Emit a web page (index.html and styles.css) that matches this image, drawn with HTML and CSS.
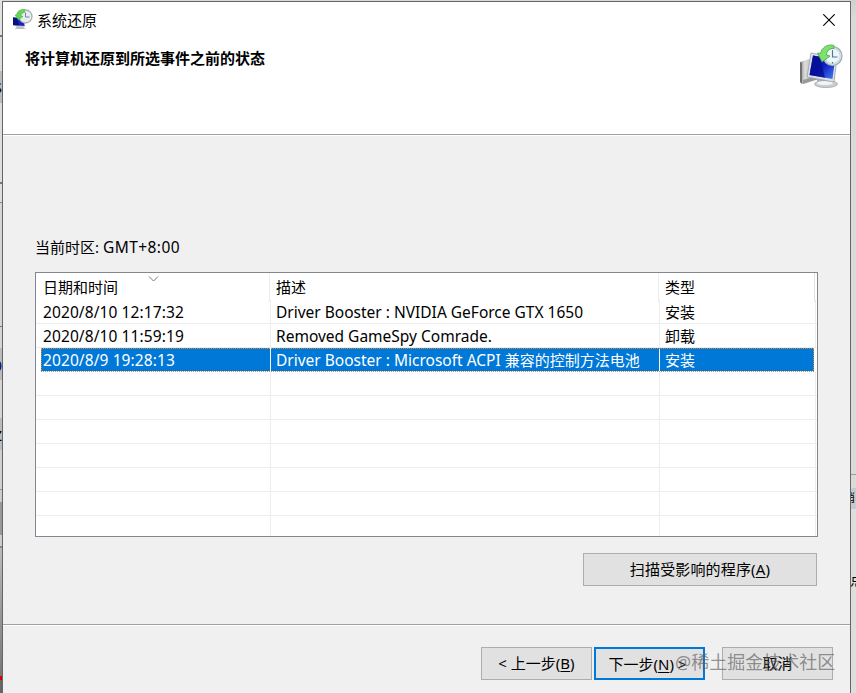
FILE: index.html
```html
<!DOCTYPE html>
<html lang="zh-CN">
<head>
    <meta charset="UTF-8">
    <meta name="viewport" content="width=device-width, initial-scale=1.0">
    <title>系统还原</title>
    <link rel="stylesheet" href="styles.css">
</head>
<body>
    <!-- 图标 -->
    <svg class="defs" width="0" height="0">
        <defs>
            <linearGradient id="screen" x1="0" y1="0" x2="1" y2="1">
                <stop offset="0" stop-color="#0818b0"/>
                <stop offset="0.5" stop-color="#0a1cc0"/>
                <stop offset="1" stop-color="#4a86f4"/>
            </linearGradient>
            <linearGradient id="metal" x1="0" y1="0" x2="1" y2="0">
                <stop offset="0" stop-color="#8a8a8a"/>
                <stop offset="0.3" stop-color="#dcdcdc"/>
                <stop offset="1" stop-color="#b2b2b2"/>
            </linearGradient>
            <symbol id="restore" viewBox="0 0 44 44">
                <path d="M1 18l9-3 7 4v16L4 40l-3-2z" fill="url(#metal)"/>
                <path d="M1 18l2 1v21l-2-2z" fill="#707070"/>
                <path d="M4 36l10-3 6 2L4 40z" fill="#9a9a9a"/>
                <path d="M18 34h10l1 6H18z" fill="#aeb2b6"/>
                <ellipse cx="27" cy="40" rx="11.500" ry="3.600" fill="#c9cdcf" stroke="#a4a8aa" stroke-width=".8"/>
                <ellipse cx="26" cy="39" rx="8" ry="2" fill="#f2f3f3"/>
                <path d="M12 9l26 5-3 24-27-5z" fill="#dfe2e6" stroke="#999fa8" stroke-width=".8"/>
                <path d="M14 11.500l22 4-2.500 19.500-23-4z" fill="url(#screen)"/>
                <path d="M14 11.500l7 1.300 5 21-15.500-2.800z" fill="#060c90" opacity=".75"/>
                <circle cx="33.500" cy="12" r="9.500" fill="#d5e2e8" stroke="#9fabb2" stroke-width="1.200"/>
                <circle cx="33.500" cy="12" r="7.500" fill="#edf6fa" stroke="#bdced6" stroke-width=".7"/>
                <path d="M33.500 6v7h5M33.500 18v1.500M26 12h1.500" fill="none" stroke="#53748c" stroke-width="1.100"/>
                <path d="M35 1.500c-6-2-12.500 2-13.500 8l-3-.5 4.500 9 8-6-3.500-1c0-4 3-7 7.500-6.500z" fill="#7fe070" stroke="#3aa83a" stroke-width=".8"/>
            </symbol>
            <symbol id="restore-small" viewBox="0 0 21 21">
                <path d="M5 17l6-.5 1 2.500 3 1H3z" fill="#b9c1c8"/>
                <path d="M1 8l11 1 1 9-12-1z" fill="#c8ccd8"/>
                <path d="M1 8.500l10.500 1L12.500 17 1 16z" fill="#1423b8"/>
                <path d="M1 8.500l4 .5 2 7.500-6-.5z" fill="#081080"/>
                <circle cx="13.500" cy="7.500" r="6.500" fill="#e6edf0" stroke="#aab0b4" stroke-width="1.300"/>
                <path d="M13.500 3.500V8h4" fill="none" stroke="#79868f"/>
                <path d="M12.500.500C8 0 5 2.500 4.500 6L3 6l3.500 5L11 7.500l-2-.5c0-2 1.500-3.500 3.500-3.500z" fill="#65d458" stroke="#3fae3f" stroke-width=".5"/>
            </symbol>
        </defs>
    </svg>

    <div class="desktop">
        <div class="behind left">
            <span class="bit s1">S</span>
            <span class="bit s2">0</span>
            <span class="bit s3">Z</span>
        </div>

        <div class="window">
            <div class="header">
                <div class="titlebar">
                    <svg class="app-icon"><use href="#restore-small"/></svg>
                    <span class="caption">系统还原</span>
                    <svg class="close" viewBox="0 0 12 12"><path d="M.3.3l11.400 11.400M11.700.3L.3 11.700" stroke="#000" stroke-width="1.100"/></svg>
                </div>
                <div class="heading">
                    <h1>将计算机还原到所选事件之前的状态</h1>
                    <svg class="big-icon"><use href="#restore"/></svg>
                </div>
            </div>

            <div class="content">
                <p class="zone">当前时区: <span class="gmt">GMT+8:00</span></p>

                <div class="list">
                    <div class="row head">
                        <div>日期和时间<svg class="sort" viewBox="0 0 10 6"><path d="M.5.5L5 5 9.500.5" fill="none" stroke="#777"/></svg></div>
                        <div>描述</div>
                        <div>类型</div>
                    </div>
                    <div class="row">
                        <div class="date">2020/8/10 12:17:32</div>
                        <div class="desc">Driver Booster : NVIDIA GeForce GTX 1650</div>
                        <div>安装</div>
                    </div>
                    <div class="row">
                        <div class="date">2020/8/10 11:59:19</div>
                        <div class="desc">Removed GameSpy Comrade.</div>
                        <div>卸载</div>
                    </div>
                    <div class="row current">
                        <div class="date">2020/8/9 19:28:13</div>
                        <div class="desc">Driver Booster : Microsoft ACPI <span class="cjk">兼容的控制方法电池</span></div>
                        <div>安装</div>
                    </div>
                    <div class="row"><div></div><div></div><div></div></div>
                    <div class="row"><div></div><div></div><div></div></div>
                    <div class="row"><div></div><div></div><div></div></div>
                    <div class="row"><div></div><div></div><div></div></div>
                    <div class="row"><div></div><div></div><div></div></div>
                    <div class="row"><div></div><div></div><div></div></div>
                    <div class="row last"><div></div><div></div><div></div></div>
                </div>

                <button class="btn scan">扫描受影响的程序(<u>A</u>)</button>
            </div>

            <div class="footer">
                <button class="btn">&lt; 上一步(<u>B</u>)</button>
                <button class="btn next">下一步(<u>N</u>) &gt;</button>
                <button class="btn cancel">取消</button>
                <span class="watermark">@稀土掘金技术社区</span>
            </div>
        </div>

        <div class="behind right">
            <span class="bit r1">消</span>
            <span class="bit r2">点</span>
        </div>
    </div>
</body>
</html>
```
FILE: styles.css
```css
*{
    margin: 0;
    padding: 0;
    box-sizing: border-box;
}

body{
    width: 856px;
    height: 693px;
    overflow: hidden;
    color: #000;
    font: 15px/24px "Noto Sans", "Noto Sans CJK SC", sans-serif;
}

.defs{
    position: absolute;
}

.desktop{
    display: flex;
    height: 693px;
    background: #d9d9d9;
}

/* 后面的窗口露出来的边 */
.behind{
    position: relative;
    overflow: hidden;
    height: 693px;
}

.left{
    width: 2px;
    background: linear-gradient(#e2e2e2 35px, #777 35px 37px, #ddd 37px 71px, #bbb 71px 103px, #ddd 103px 182px, #777 182px 184px, #ddd 184px 202px, #888 202px 203px, #d5d5d5 203px 326px, #777 326px 327px, #d5d5d5 327px 348px, #bbb 348px 380px, #d5d5d5 380px 418px, #bbb 418px 450px, #d0d0d0 450px 489px, #999 489px 490px, #ccc 490px 502px, #999 502px 535px, #ccc 535px 546px, #888 546px 548px, #bbb 548px, #777 676px, #d00 676px 680px, #666 680px);
}

.right{
    width: 5px;
    background: linear-gradient(#d0d0d0, #dadada 20px 474px, #999 474px 475px, #dadada 475px 488px, #c5caca 488px 509px, #dedede 509px);
}

.bit{
    position: absolute;
    line-height: 20px;
}

.s1{ top: 77px; right: 0; }
.s2{ top: 355px; right: 0; color: #006; }
.s3{ top: 425px; right: 0; }
.r1{ top: 488px; left: -7px; font-size: 11px; }
.r2{ top: 569px; left: -1px; }

.window{
    display: flex;
    flex-direction: column;
    width: 849px;
    height: 692px;
    margin-top: 1px;
    background: #f0f0f0;
    border: 1px solid #666;
    border-bottom: none;
}

.header{
    height: 133px;
    background: #fff;
    border-bottom: 1px solid #a0a0a0;
}

.titlebar{
    display: flex;
    align-items: center;
    height: 36px;
    padding: 0 15px 0 9px;
}

.app-icon{
    width: 21px;
    height: 21px;
    margin-bottom: 1px;
}

.caption{
    margin: -1px 0 0 4px;
}

.close{
    width: 12px;
    height: 12px;
    margin-left: auto;
}

.heading{
    display: flex;
    justify-content: space-between;
    padding: 6px 7px 0 22px;
}

h1{
    margin-top: 2px;
    font-size: 15px;
    line-height: 24px;
}

.big-icon{
    width: 44px;
    height: 44px;
}

.content{
    flex: 1;
    display: flex;
    flex-direction: column;
    padding: 99px 32px 0;
    border-top: 1px solid #fff;
}

.zone{
    height: 37px;
}

.gmt{
    font-size: 15.5px;
    letter-spacing: .45px;
}

.list{
    width: 783px;
    height: 265px;
    background: #fff;
    border: 1px solid #828790;
    overflow: hidden;
}

.row{
    display: grid;
    grid-template-columns: 235px 389px 157px;
    height: 24px;
    border-bottom: 1px solid #ededed;
}

.row div{
    padding-left: 5px;
    border-right: 1px solid #ededed;
    line-height: 24px;
    white-space: nowrap;
}

.row div:first-child{
    padding-left: 7px;
}

.row div:last-child{
    margin-right: 1px;
}

.row .date{
    font-size: 15.5px;
    letter-spacing: .1px;
}

.row .desc{
    font-size: 15.5px;
}

.cjk{
    font-size: 15px;
}

.row.head{
    position: relative;
    grid-template-columns: 234px 389px 156px;
    height: 27px;
    border-bottom: none;
}

.head div{
    line-height: 29px;
}

.head div:nth-child(n+2){
    padding-left: 6px;
}

.head div:last-child{
    margin-right: 0;
    border-color: #e0e0e0;
}

.sort{
    position: absolute;
    top: 3px;
    left: 112px;
    width: 11px;
    height: 6px;
}

.row.current{
    grid-template-columns: 230px 389px 154px;
    width: 773px;
    margin-left: 5px;
    color: #fff;
    background: #0078d7;
    background-clip: padding-box;
    border-bottom-color: #fff;
    outline: 1px dotted #d58a38;
    outline-offset: -1px;
}

.current div{
    border-color: #fff;
}

.row.current div:first-child{
    padding-left: 2px;
}

.current div:last-child{
    border: none;
}

.btn{
    width: 111px;
    height: 33px;
    color: #000;
    font: inherit;
    line-height: 30px;
    padding-bottom: 2px;
    background: #e1e1e1;
    border: 1px solid #adadad;
    white-space: nowrap;
}

.btn u{
    text-underline-offset: 2px;
}

.scan{
    width: 234px;
    margin: 16px 0 0 548px;
    letter-spacing: .15px;
}

.footer{
    position: relative;
    display: flex;
    height: 69px;
    padding: 22px 0 0 478px;
    border-top: 1px solid #a0a0a0;
    box-shadow: inset 0 1px #fff;
}

.next{
    margin-left: 2px;
    padding-right: 4px;
    border: 2px solid #0078d7;
}

.cancel{
    margin-left: 17px;
}

.watermark{
    position: absolute;
    top: 25px;
    left: 672px;
    color: rgba(90, 90, 90, .65);
    font-size: 18px;
    white-space: nowrap;
}
```
